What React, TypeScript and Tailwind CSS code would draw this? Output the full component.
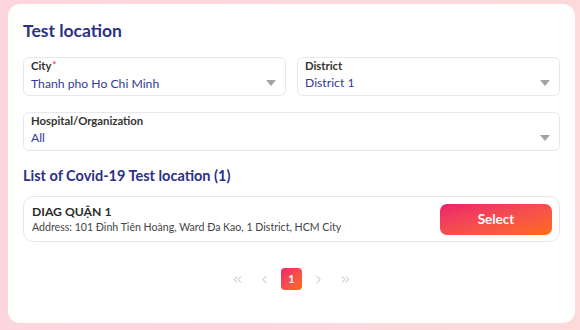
import { ChevronLeft, ChevronRight, ChevronsLeft, ChevronsRight } from "lucide-react";

const FONT = { fontFamily: "Lato, 'Noto Sans', sans-serif" };

function Caret() {
  return (
    <svg width="10" height="6" viewBox="0 0 10 6" className="shrink-0">
      <path d="M0 0 L10 0 L5 6 Z" fill="#a3a3a3" />
    </svg>
  );
}

function SelectField({ label, value, required }: { label: string; value: string; required?: boolean }) {
  return (
    <div className="flex h-[39px] items-start rounded-[6px] border border-[#e6e8ec] pt-[1px] pl-[7px] pr-[9px]">
      <div className="flex min-w-0 flex-1 flex-col">
        <span className="text-[11.3px] leading-[14px] font-bold text-[#333333]">
          {label}
          {required && <span className="relative -top-[2px] ml-[1px] text-[9px] text-[#f0345a]">*</span>}
        </span>
        <span className="mt-[2px] text-[12.2px] leading-[16px] text-[#34399a]">{value}</span>
      </div>
      <div className="mt-[21px]">
        <Caret />
      </div>
    </div>
  );
}

export default function App() {
  return (
    <div
      className="flex h-[330px] w-[580px] bg-gradient-to-r from-[#fdd5df] to-[#fddada] pt-[4px] pr-[5px] pb-[7px] pl-[8px]"
      style={FONT}
    >
      <div className="flex flex-1 flex-col rounded-[12px] bg-white px-[15px] pt-[17px]">
        <h1 className="text-[17.5px] leading-[20px] font-bold text-[#2c3185]">Test location</h1>

        <div className="mt-[16px] grid grid-cols-2 gap-[11px]">
          <SelectField label="City" value="Thanh pho Ho Chi Minh" required />
          <SelectField label="District" value="District 1" />
        </div>

        <div className="mt-[16px]">
          <SelectField label="Hospital/Organization" value="All" />
        </div>

        <h2 className="mt-[16px] text-[14.5px] leading-[18px] font-bold text-[#2c3185]">
          List of Covid-19 Test location (1)
        </h2>

        <div className="mt-[11px] flex h-[46px] items-center rounded-[10px] border border-[#e6e8ec] pl-[8px] pr-[7px]">
          <div className="flex flex-1 flex-col">
            <span className="text-[12.2px] leading-[16px] font-bold text-[#2b2b2b]">DIAG QUẬN 1</span>
            <span className="text-[10.6px] leading-[15px] text-[#444444]">
              Address: 101 Đinh Tiên Hoàng, Ward Đa Kao, 1 District, HCM City
            </span>
          </div>
          <button className="h-[31px] w-[112px] rounded-[7px] bg-gradient-to-br from-[#ec1e6a] to-[#ff6c0a] text-[13.5px] font-bold text-white">
            Select
          </button>
        </div>

        <div className="mt-[26px] flex items-center justify-center gap-[10px] text-[#b5b5b5]">
          <ChevronsLeft size={13} strokeWidth={1.75} className="mr-[4px]" />
          <ChevronLeft size={13} strokeWidth={1.75} />
          <span className="flex h-[22px] w-[21px] items-center justify-center rounded-[4px] bg-gradient-to-br from-[#ec1e6a] to-[#ff6c0a] text-[11px] font-bold text-white">
            1
          </span>
          <ChevronRight size={13} strokeWidth={1.75} />
          <ChevronsRight size={13} strokeWidth={1.75} className="ml-[4px]" />
        </div>
      </div>
    </div>
  );
}
